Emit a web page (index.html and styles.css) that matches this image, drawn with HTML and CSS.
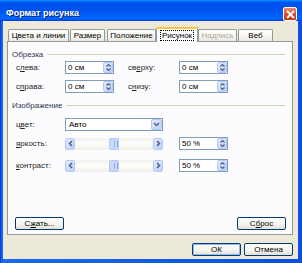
FILE: index.html
```html
<!DOCTYPE html>
<html lang="ru">
<head>
  <meta charset="UTF-8" />
  <title>Формат рисунка</title>
  <link rel="stylesheet" href="styles.css">
</head>
<body>
  <div class="window">
    <div class="titlebar">
      <span class="title">Формат рисунка</span>
      <span class="close">
        <svg width="9" height="9" viewBox="0 0 9 9"><path d="M1 1L8 8M8 1L1 8" stroke="#fff" stroke-width="1.8"/></svg>
      </span>
    </div>

    <div class="client">
      <div class="tabs">
        <span class="tab tab-colors">Цвета и линии</span>
        <span class="tab tab-size">Размер</span>
        <span class="tab tab-pos">Положение</span>
        <span class="tab tab-pic active"><span class="focus">Рисунок</span></span>
        <span class="tab tab-text disabled">Надпись</span>
        <span class="tab tab-web">Веб</span>
      </div>

      <div class="panel">
        <div class="group group-crop"><span>Обрезка</span></div>
        <div class="row row-top">
          <span class="lbl">с<u>л</u>ева:</span>
          <div class="spin"><span>0 см</span><i class="spin-btn"><svg width="5" height="9" viewBox="0 0 5 9"><path d="M0.5 3.5L2.5 1.5L4.5 3.5M0.5 5.5L2.5 7.5L4.5 5.5" fill="none" stroke="#4d6185" stroke-width="1.2"/></svg></i></div>
          <span class="lbl lbl-right">св<u>е</u>рху:</span>
          <div class="spin"><span>0 см</span><i class="spin-btn"><svg width="5" height="9" viewBox="0 0 5 9"><path d="M0.5 3.5L2.5 1.5L4.5 3.5M0.5 5.5L2.5 7.5L4.5 5.5" fill="none" stroke="#4d6185" stroke-width="1.2"/></svg></i></div>
        </div>
        <div class="row row-bottom">
          <span class="lbl">с<u>п</u>рава:</span>
          <div class="spin"><span>0 см</span><i class="spin-btn"><svg width="5" height="9" viewBox="0 0 5 9"><path d="M0.5 3.5L2.5 1.5L4.5 3.5M0.5 5.5L2.5 7.5L4.5 5.5" fill="none" stroke="#4d6185" stroke-width="1.2"/></svg></i></div>
          <span class="lbl lbl-right">с<u>н</u>изу:</span>
          <div class="spin"><span>0 см</span><i class="spin-btn"><svg width="5" height="9" viewBox="0 0 5 9"><path d="M0.5 3.5L2.5 1.5L4.5 3.5M0.5 5.5L2.5 7.5L4.5 5.5" fill="none" stroke="#4d6185" stroke-width="1.2"/></svg></i></div>
        </div>

        <div class="group group-image"><span>Изображение</span></div>
        <div class="row row-color">
          <span class="lbl">ц<u>в</u>ет:</span>
          <div class="select"><span>Авто</span><i class="select-btn"><svg width="7" height="5" viewBox="0 0 7 5"><path d="M1 1L3.5 3.5L6 1" fill="none" stroke="#4d6185" stroke-width="1.5"/></svg></i></div>
        </div>
        <div class="row row-bright">
          <span class="lbl"><u>я</u>ркость:</span>
          <div class="slider">
            <i class="arrow"><svg width="5" height="7" viewBox="0 0 5 7"><path d="M4 1L1.5 3.5L4 6" fill="none" stroke="#4d6185" stroke-width="1.5"/></svg></i>
            <span class="track"><i class="thumb"></i></span>
            <i class="arrow"><svg width="5" height="7" viewBox="0 0 5 7"><path d="M1 1L3.5 3.5L1 6" fill="none" stroke="#4d6185" stroke-width="1.5"/></svg></i>
          </div>
          <div class="spin spin-pct"><span>50 %</span><i class="spin-btn"><svg width="5" height="9" viewBox="0 0 5 9"><path d="M0.5 3.5L2.5 1.5L4.5 3.5M0.5 5.5L2.5 7.5L4.5 5.5" fill="none" stroke="#4d6185" stroke-width="1.2"/></svg></i></div>
        </div>
        <div class="row row-contrast">
          <span class="lbl"><u>к</u>онтраст:</span>
          <div class="slider">
            <i class="arrow"><svg width="5" height="7" viewBox="0 0 5 7"><path d="M4 1L1.5 3.5L4 6" fill="none" stroke="#4d6185" stroke-width="1.5"/></svg></i>
            <span class="track"><i class="thumb"></i></span>
            <i class="arrow"><svg width="5" height="7" viewBox="0 0 5 7"><path d="M1 1L3.5 3.5L1 6" fill="none" stroke="#4d6185" stroke-width="1.5"/></svg></i>
          </div>
          <div class="spin spin-pct"><span>50 %</span><i class="spin-btn"><svg width="5" height="9" viewBox="0 0 5 9"><path d="M0.5 3.5L2.5 1.5L4.5 3.5M0.5 5.5L2.5 7.5L4.5 5.5" fill="none" stroke="#4d6185" stroke-width="1.2"/></svg></i></div>
        </div>

        <div class="panel-buttons">
          <button class="btn">С<u>ж</u>ать...</button>
          <button class="btn">С<u>б</u>рос</button>
        </div>
      </div>

      <div class="dialog-buttons">
        <button class="btn btn-default">ОК</button>
        <button class="btn">Отмена</button>
      </div>
    </div>
  </div>
</body>
</html>
```

FILE: styles.css
```css
body {
  margin: 0;
  padding: 0;
  font-family: 'Liberation Sans', Arial, sans-serif;
  font-size: 8px;
  color: #000;
  background: #0a3fd0;
}

.window {
  width: 302px;
  height: 263px;
  display: flex;
  flex-direction: column;
  background: linear-gradient(90deg, #0831d9, #166aee 2px, #0b4fe0);
}

.titlebar {
  height: 21px;
  flex: none;
  display: flex;
  align-items: center;
  justify-content: space-between;
  padding: 0 5px 0 6px;
  background: linear-gradient(#0997ff, #0053ee 12%, #0050ee 40%, #0066ff 85%, #005bff 92%, #003dd7);
}

.title {
  color: #fff;
  font-weight: bold;
  font-size: 9px;
  padding-top: 4px;
  text-shadow: 1px 1px 0 #0a1f7a;
}

.close {
  width: 12px;
  height: 12px;
  margin-top: 7px;
  border: 1px solid #fff;
  border-radius: 2px;
  background: linear-gradient(#e98a6f, #d9442a 60%, #c23518);
  display: flex;
  align-items: center;
  justify-content: center;
}

.client {
  flex: 1;
  margin: 0 4px 4px 3px;
  background: #ece9d8;
  display: flex;
  flex-direction: column;
}

/* tabs */
.tabs {
  display: flex;
  align-items: flex-end;
  height: 20px;
  padding-left: 5px;
}

.tab {
  height: 11px;
  line-height: 11px;
  text-align: center;
  border: 1px solid #919b9c;
  border-bottom: none;
  border-radius: 2px 2px 0 0;
  background: linear-gradient(#fefefe, #f4f3ee 70%, #e9e6dc);
  margin-right: 1px;
  white-space: nowrap;
}

.tab-colors { width: 59px; }
.tab-size { width: 33px; margin-right: 2px; }
.tab-pos { width: 47px; }
.tab-pic { width: 40px; }
.tab-text { width: 37px; }
.tab-web { width: 33px; }

.tab.active {
  height: 13px;
  line-height: 13px;
  margin: 0 0 -1px -1px;
  background: #fcfcfe;
  border-top: 2px solid #ffc83c;
  position: relative;
}

.focus {
  border: 1px dotted #000;
  padding: 0 1px;
}

.tab.disabled {
  color: #aca899;
}

/* panel */
.panel {
  height: 192px;
  margin: 0 5px 0 4px;
  border: 1px solid #919b9c;
  background: #fcfcfe;
  display: flex;
  flex-direction: column;
}

.group {
  display: flex;
  align-items: center;
  height: 10px;
  padding: 0 7px 0 4px;
  color: #2c3550;
}

.group::after {
  content: "";
  flex: 1;
  height: 1px;
  margin-left: 4px;
  background: #d0d0bf;
}

.group-crop { margin-top: 7px; }
.group-image { margin-top: 7px; }

.row {
  display: flex;
  align-items: center;
  height: 13px;
  padding-left: 8px;
}

.row-top { margin-top: 2px; }
.row-bottom { margin-top: 6px; }
.row-color { margin-top: 8px; }
.row-bright { margin-top: 6px; }
.row-contrast { margin-top: 9px; }

.lbl {
  width: 49px;
  flex: none;
  color: #1e1e1e;
}

.lbl-right {
  width: 51px;
  margin-left: 14px;
}

.spin {
  width: 49px;
  height: 13px;
  box-sizing: border-box;
  border: 1px solid #7f9db9;
  background: #fff;
  display: flex;
  align-items: center;
  justify-content: space-between;
  padding-left: 2px;
}

.spin-btn, .select-btn, .arrow {
  display: flex;
  align-items: center;
  justify-content: center;
  background: linear-gradient(135deg, #e3ebfd, #bccffa);
  border: 1px solid #b4c8f5;
  border-radius: 2px;
  box-sizing: border-box;
}

.spin-btn {
  width: 10px;
  height: 11px;
}

.spin-pct {
  margin-left: 16px;
}

.select {
  width: 98px;
  height: 13px;
  box-sizing: border-box;
  border: 1px solid #7f9db9;
  background: #fff;
  display: flex;
  align-items: center;
  justify-content: space-between;
  padding-left: 3px;
}

.select-btn {
  width: 11px;
  height: 11px;
}

.slider {
  width: 98px;
  height: 12px;
  display: flex;
  align-items: center;
}

.arrow {
  width: 10px;
  height: 12px;
  flex: none;
}

.track {
  flex: 1;
  height: 12px;
  background: linear-gradient(#f3f2ee, #fdfdfb 50%, #f0efe9);
  display: flex;
  align-items: center;
  padding-left: 34px;
}

.thumb {
  width: 10px;
  height: 12px;
  box-sizing: border-box;
  border: 1px solid #b4c8f5;
  border-radius: 2px;
  background: repeating-linear-gradient(90deg, #c9d8fc 0 2px, #8fa9e6 2px 3px);
  background-size: 6px 6px;
  background-position: 2px center;
  background-repeat: no-repeat;
  background-color: #c9d8fc;
}

.panel-buttons {
  margin-top: auto;
  margin-bottom: 4px;
  display: flex;
  justify-content: space-between;
  padding: 0 6px 0 7px;
}

.btn {
  width: 49px;
  height: 13px;
  padding: 0;
  font-family: 'Liberation Sans', Arial, sans-serif;
  font-size: 8px;
  color: #000;
  border: 1px solid #003c74;
  border-radius: 2px;
  background: linear-gradient(#ffffff, #f4f3ee 60%, #e3e0d6);
}

.btn-default {
  box-shadow: inset 0 0 0 1px #98b4ea;
}

.dialog-buttons {
  display: flex;
  justify-content: flex-end;
  gap: 3px;
  padding: 8px 5px 0 0;
}
```
